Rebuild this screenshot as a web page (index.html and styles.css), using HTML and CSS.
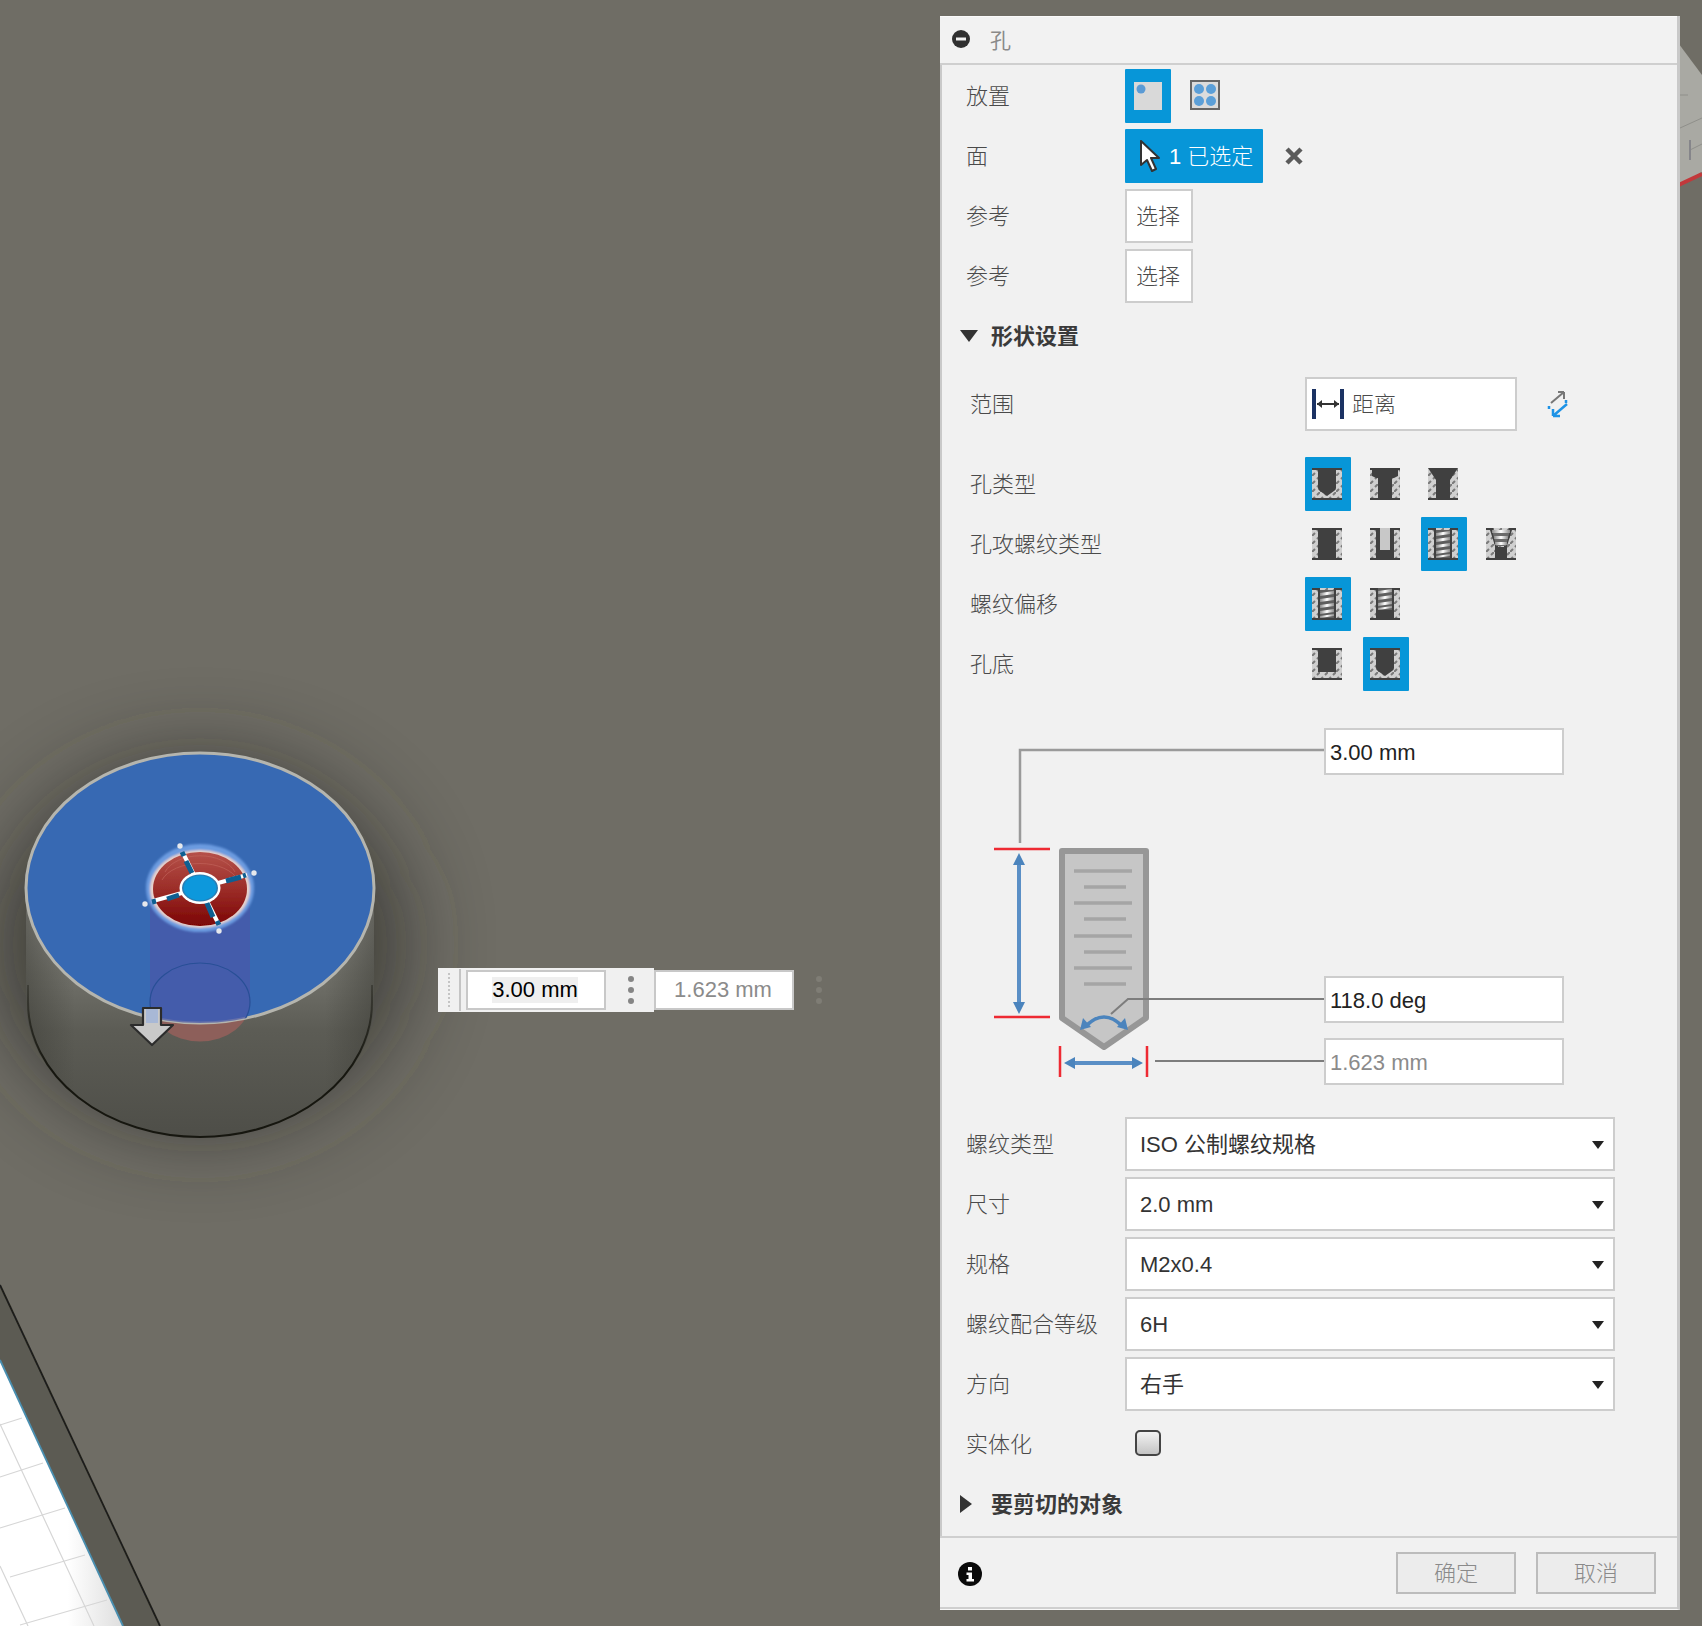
FILE: index.html
```html
<!DOCTYPE html>
<html lang="zh-CN">
<head>
<meta charset="utf-8">
<title>孔</title>
<link rel="stylesheet" href="styles.css">
</head>
<body>
<main class="stage">
  <svg class="scene" viewBox="0 0 1702 1626" width="1702" height="1626" aria-hidden="true">
    <defs>
      <filter id="blur40" x="-60%" y="-60%" width="220%" height="220%"><feGaussianBlur stdDeviation="46"/></filter>
      <filter id="blur1" x="-10%" y="-10%" width="120%" height="120%"><feGaussianBlur stdDeviation="0.7"/></filter>
      <filter id="blur2" x="-20%" y="-20%" width="140%" height="140%"><feGaussianBlur stdDeviation="1.2"/></filter>
      <linearGradient id="side" gradientUnits="userSpaceOnUse" x1="0" y1="900" x2="0" y2="1137">
        <stop offset="0" stop-color="#94948e"/><stop offset=".3" stop-color="#72726b"/><stop offset=".55" stop-color="#5c5c55"/><stop offset="1" stop-color="#4e4e48"/>
      </linearGradient>
      <linearGradient id="sideH" x1="0" y1="0" x2="1" y2="0">
        <stop offset="0" stop-color="#3a3a34" stop-opacity=".5"/><stop offset=".14" stop-color="#3a3a34" stop-opacity="0"/><stop offset=".86" stop-color="#3a3a34" stop-opacity="0"/><stop offset="1" stop-color="#3a3a34" stop-opacity=".5"/>
      </linearGradient>
      <linearGradient id="rimFade" gradientUnits="userSpaceOnUse" x1="0" y1="985" x2="0" y2="1070">
        <stop offset="0" stop-color="#16160f" stop-opacity=".35"/><stop offset="1" stop-color="#16160f"/>
      </linearGradient>
      <linearGradient id="holeRed" x1="0" y1="0" x2="0" y2="1">
        <stop offset="0" stop-color="#b5514a"/><stop offset=".5" stop-color="#9c2d28"/><stop offset="1" stop-color="#7c0505"/>
      </linearGradient>
      <linearGradient id="gridFade" x1="0" y1="0" x2="1" y2="0">
        <stop offset="0" stop-color="#ffffff"/><stop offset=".55" stop-color="#ffffff"/><stop offset="1" stop-color="#dedede"/>
      </linearGradient>
      <clipPath id="aboveFace"><ellipse cx="200" cy="888" rx="174" ry="135"/></clipPath>
    </defs>

    <!-- distant part, top right -->
    <g filter="url(#blur1)">
      <path d="M1670 32 L1702 75 V172 L1670 190Z" fill="#a9a9a3"/>
      <path d="M1680 95h8M1680 128l22-10M1690 150l12-6" stroke="#8f8f8a" stroke-width="1" fill="none"/>
      <path d="M1690 140v20" stroke="#85858a" stroke-width="2" fill="none"/>
      <path d="M1670 189 L1702 174" stroke="#c2393a" stroke-width="4"/>
    </g>

    <!-- plate, bottom left -->
    <path d="M0 1360 L123 1626 H0Z" fill="url(#gridFade)"/>
    <g stroke="#d6d6d6" stroke-width="1.200" fill="none" filter="url(#blur1)">
      <path d="M0 1425 L22 1418M0 1477 L43 1463M0 1528 L65 1508M10 1577 L85 1555M20 1625 L107 1600"/>
      <path d="M0 1424 L94 1626M0 1566 L28 1626"/>
    </g>
    <path d="M0 1285 L160 1626 H123 L0 1360Z" fill="#5c5b53"/>
    <path d="M0 1285 L160 1626" stroke="#1e1e1a" stroke-width="1.800" filter="url(#blur1)"/>
    <path d="M0 1360 L123 1626" stroke="#4a8fb0" stroke-width="1.800" filter="url(#blur1)"/>

    <!-- cylinder -->
    <ellipse cx="200" cy="945" rx="200" ry="180" fill="#2c2c26" opacity=".75" filter="url(#blur40)"/>
    <path d="M26 888 V1002 A174 135 0 0 0 374 1002 V888Z" fill="url(#side)"/>
    <path d="M26 888 V1002 A174 135 0 0 0 374 1002 V888Z" fill="url(#sideH)"/>
    <path d="M28 985 V1002 A172 135 0 0 0 372 1002 V985" fill="none" stroke="url(#rimFade)" stroke-width="2"/>
    <ellipse cx="200" cy="1002" rx="50" ry="39.500" fill="#8d5f5a"/>
    <ellipse cx="200" cy="888" rx="174" ry="135" fill="#3769b3" stroke="#b5b5ae" stroke-width="3"/>
    <g clip-path="url(#aboveFace)">
      <path d="M150 888 V1002 A50 39 0 0 0 250 1002 V888Z" fill="#4a58a8" opacity=".72"/>
      <ellipse cx="200" cy="1002" rx="50" ry="39" fill="none" stroke="#284f96" stroke-width="1.200"/>
    </g>

    <!-- arrow manipulator -->
    <path d="M143 1008 H161 V1025 H173 L152 1045 L131 1025 H143Z" fill="#c9c9c9" stroke="#2c2c2c" stroke-width="2.200" stroke-linejoin="round"/>
    <rect x="146" y="1009" width="12" height="14" fill="#a8b8d6"/>

    <!-- hole -->
    <g filter="url(#blur2)">
      <ellipse cx="200" cy="888" rx="54" ry="44" fill="#6c9be0"/>
      <ellipse cx="200" cy="889" rx="50" ry="39" fill="#e9d2cb"/>
    </g>
    <g filter="url(#blur1)">
      <ellipse cx="200" cy="889" rx="47" ry="37" fill="url(#holeRed)"/>
      <g fill="none" stroke="#c0625a" stroke-width="1" opacity=".7">
        <path d="M165 872 A37 24 0 0 1 235 872M162 880 A40 24 0 0 1 238 880"/>
      </g>
      <path d="M183 853 L219 925" stroke="#ffffff" stroke-width="4"/>
      <path d="M153 901 L247 875" stroke="#ffffff" stroke-width="4"/>
      <path d="M186 861 L192 873M206 901 L213 917M167 899 L179 895M226 881 L241 877M182 852 L184 856M217 921 L219 925M152 902 L156 901M243 876 L246 875" stroke="#0f5f92" stroke-width="5"/>
      <g fill="#e6e8ec">
        <circle cx="180" cy="846" r="2.700"/><circle cx="254" cy="873" r="2.700"/><circle cx="145" cy="904" r="2.700"/><circle cx="219" cy="931" r="2.700"/>
      </g>
      <ellipse cx="200" cy="888" rx="20.500" ry="16" fill="#ffffff"/>
      <ellipse cx="200" cy="888" rx="18" ry="13.500" fill="#2f7cb0"/>
      <ellipse cx="200" cy="888" rx="16.500" ry="12.500" fill="#0798dc"/>
    </g>
  </svg>

  <div class="quick">
    <span class="grip"></span>
    <span class="quick-input"><span class="sel">3.00 mm</span></span>
    <span class="dots"><i></i><i></i><i></i></span>
    <span class="quick-input muted">1.623 mm</span>
    <span class="dots ghost"><i></i><i></i><i></i></span>
  </div>

  <section class="panel">
    <svg class="defs" width="0" height="0" aria-hidden="true">
      <defs>
        <pattern id="hatch" width="8" height="8" patternUnits="userSpaceOnUse">
          <rect width="8" height="8" fill="#d0d0d0"/>
          <path d="M-1 9 L3 5M5 3 L9 -1" stroke="#7a7a7a" stroke-width="2"/>
        </pattern>
        <linearGradient id="thread" x1="0" y1="0" x2="1" y2="0">
          <stop offset="0" stop-color="#8c8c8c"/><stop offset=".5" stop-color="#ffffff"/><stop offset="1" stop-color="#8c8c8c"/>
        </linearGradient>
        <symbol id="base" viewBox="0 0 30 32">
          <rect width="30" height="32" fill="url(#hatch)"/>
          <rect y="30" width="30" height="2" fill="#404040"/>
        </symbol>
        <symbol id="threads" viewBox="0 0 30 32">
          <rect x="8" y="2" width="14" height="28" fill="#5e5e5e"/>
          <path fill="url(#thread)" d="M8 5 L22 3 V6 L8 8ZM8 11 L22 9 V12 L8 14ZM8 17 L22 15 V18 L8 20ZM8 23 L22 21 V24 L8 26ZM8 28 L22 26 V28 L8 30Z"/>
          <path d="M6 0H8V32H6ZM22 0H24V32H22Z" fill="#404040"/>
          <rect width="8" height="2" fill="#404040"/><rect x="22" width="8" height="2" fill="#404040"/>
        </symbol>
      </defs>
    </svg>

    <header class="title">
      <svg class="ico-min" viewBox="0 0 18 18" width="18" height="18"><circle cx="9" cy="9" r="9" fill="#303030"/><rect x="4" y="7.500" width="10" height="3" fill="#f2f2f2"/></svg>
      <span class="title-text">孔</span>
    </header>

    <div class="body">
      <div class="rows top-rows">
        <div class="row">
          <span class="label">放置</span>
          <span class="tool on">
            <svg viewBox="0 0 28 28" width="28" height="28"><rect width="28" height="28" fill="#d9d9d9"/><circle cx="7" cy="7" r="4.500" fill="#5b9bd5"/></svg>
          </span>
          <span class="tool tool-grid">
            <svg viewBox="0 0 30 30" width="30" height="30"><rect x="1" y="1" width="28" height="28" fill="#dcdcdc" stroke="#666" stroke-width="2"/><g fill="#5b9fd8"><circle cx="9" cy="9" r="5"/><circle cx="21" cy="9" r="5"/><circle cx="9" cy="21" r="5"/><circle cx="21" cy="21" r="5"/></g></svg>
          </span>
        </div>
        <div class="row">
          <span class="label">面</span>
          <span class="picked">
            <svg viewBox="0 0 20 32" width="20" height="32"><path d="M1 1 L1 25 L7 20 L12 31 L16 29 L11 18 L19 18Z" fill="#fff" stroke="#333" stroke-width="2" stroke-linejoin="round"/></svg>
            <span class="zh">1 已选定</span>
          </span>
          <svg class="clear" viewBox="0 0 18 18" width="18" height="18"><path d="M2 2 L16 16M16 2 L2 16" stroke="#5a5a5a" stroke-width="4.500"/></svg>
        </div>
        <div class="row"><span class="label">参考</span><span class="pick">选择</span></div>
        <div class="row"><span class="label">参考</span><span class="pick">选择</span></div>
        <div class="row section">
          <span class="tri-down"></span><span class="section-text">形状设置</span>
        </div>
      </div>

      <div class="row sub range-row">
        <span class="label">范围</span>
        <span class="range-box">
          <svg viewBox="0 0 32 30" width="32" height="30"><path d="M2 0V30M30 0V30" stroke="#1b3263" stroke-width="4"/><path d="M5 15H27" stroke="#333" stroke-width="2"/><path d="M5 15l5-4v8zM27 15l-5-4v8z" fill="#333"/></svg>
          <span class="zh">距离</span>
        </span>
        <svg class="swap" viewBox="0 0 22 28" width="22" height="28"><path d="M4 13 L17 2M17 2h-6M17 2v7" fill="none" stroke="#777" stroke-width="2"/><path d="M20 14 L6 26M6 26h7M6 26v-7M2 19v-3M19 10v3" fill="none" stroke="#1e93e6" stroke-width="2.500"/></svg>
      </div>

      <div class="rows icon-rows">
        <div class="row sub">
          <span class="label">孔类型</span>
          <span class="tool on"><svg class="hole" viewBox="0 0 30 32" width="30" height="32"><use href="#base"/><path d="M0 0H30V2H24V20Q24 22 22 23L15 28L8 23Q6 22 6 20V2H0Z" fill="#404040"/></svg></span>
          <span class="tool"><svg class="hole" viewBox="0 0 30 32" width="30" height="32"><use href="#base"/><path d="M0 0H30V2H28V8L24 10H22V32H8V10H6L2 8V2H0Z" fill="#404040"/></svg></span>
          <span class="tool"><svg class="hole" viewBox="0 0 30 32" width="30" height="32"><use href="#base"/><path d="M0 0H30L22 12V32H8V12Z" fill="#404040"/></svg></span>
        </div>
        <div class="row sub">
          <span class="label">孔攻螺纹类型</span>
          <span class="tool"><svg class="hole" viewBox="0 0 30 32" width="30" height="32"><use href="#base"/><path d="M0 0H30V2H24V32H6V2H0Z" fill="#404040"/></svg></span>
          <span class="tool"><svg class="hole" viewBox="0 0 30 32" width="30" height="32"><use href="#base"/><path d="M0 0H30V2H24V32H6V2H0Z" fill="#404040"/><rect x="10" width="10" height="22" fill="#c8c8c8"/></svg></span>
          <span class="tool on"><svg class="hole" viewBox="0 0 30 32" width="30" height="32"><use href="#base"/><use href="#threads"/></svg></span>
          <span class="tool"><svg class="hole" viewBox="0 0 30 32" width="30" height="32"><use href="#base"/><path d="M0 0H7L12 18V32H18V18L23 0H30V2H26L21 18V32H9V18L4 2H0Z" fill="#404040"/><rect x="11" y="19" width="8" height="12" fill="#404040"/><path d="M6 2H24L20 18H10Z" fill="#6a6a6a"/><g fill="url(#thread)"><rect x="6" y="2" width="18" height="3"/><rect x="8" y="8" width="14" height="3"/><rect x="9" y="14" width="12" height="3"/></g></svg></span>
        </div>
        <div class="row sub">
          <span class="label">螺纹偏移</span>
          <span class="tool on"><svg class="hole" viewBox="0 0 30 32" width="30" height="32"><use href="#base"/><use href="#threads"/></svg></span>
          <span class="tool"><svg class="hole" viewBox="0 0 30 32" width="30" height="32"><use href="#base"/><path d="M0 0H30V2H24V32H6V2H0Z" fill="#404040"/><rect x="8" width="14" height="22" fill="#5e5e5e"/><path fill="url(#thread)" d="M8 3 L22 1 V4 L8 6ZM8 9 L22 7 V10 L8 12ZM8 15 L22 13 V16 L8 18ZM8 20 L22 18 V20 L8 22Z"/></svg></span>
        </div>
        <div class="row sub">
          <span class="label">孔底</span>
          <span class="tool"><svg class="hole" viewBox="0 0 30 32" width="30" height="32"><use href="#base"/><path d="M0 0H30V2H24V24H6V2H0Z" fill="#404040"/></svg></span>
          <span class="tool on"><svg class="hole" viewBox="0 0 30 32" width="30" height="32"><use href="#base"/><path d="M0 0H30V2H24V20Q24 22 22 23L15 28L8 23Q6 22 6 20V2H0Z" fill="#404040"/></svg></span>
        </div>
      </div>

      <div class="diagram">
        <svg class="dia-art" viewBox="0 0 740 426" width="740" height="426" aria-hidden="true">
          <g transform="translate(-940 -691)">
            <path d="M1020 843 V750 H1326" fill="none" stroke="#9a9a9a" stroke-width="2.500"/>
            <path d="M994 849 H1050M994 1017 H1050" stroke="#ee2a33" stroke-width="2.500"/>
            <path d="M1019 860 V1007" stroke="#5a8fc6" stroke-width="4"/>
            <path d="M1019 853 L1025 865 H1013ZM1019 1014 L1025 1002 H1013Z" fill="#4b84bd"/>
            <path d="M1062 851 H1146 V1018 L1104 1047 L1062 1018Z" fill="#c6c6c6" stroke="#979797" stroke-width="6" stroke-linejoin="round"/>
            <g stroke="#a5a5a5" stroke-width="3.500">
              <path d="M1074 871H1132M1084 887H1126M1074 903H1132M1084 919H1126M1074 936H1132M1084 952H1126M1074 968H1132M1084 984H1126"/>
            </g>
            <path d="M1111 1014 L1128 999 H1326" fill="none" stroke="#7d7d7d" stroke-width="2"/>
            <path d="M1086 1026 Q1104 1008 1122 1026" fill="none" stroke="#4b84bd" stroke-width="3.500"/>
            <path d="M1080 1030 L1083 1018 L1091 1027ZM1128 1030 L1125 1018 L1117 1027Z" fill="#4b84bd"/>
            <path d="M1060 1046 V1077M1147 1046 V1077" stroke="#ee2a33" stroke-width="2.500"/>
            <path d="M1070 1063 H1137" stroke="#5a8fc6" stroke-width="4"/>
            <path d="M1064 1063 L1075 1057 V1069ZM1143 1063 L1132 1057 V1069Z" fill="#4b84bd"/>
            <path d="M1155 1061 H1326" stroke="#7d7d7d" stroke-width="2"/>
          </g>
        </svg>
        <span class="dim">3.00 mm</span>
        <span class="dim dim-angle">118.0 deg</span>
        <span class="dim dim-width muted">1.623 mm</span>
      </div>

      <div class="rows">
        <div class="row"><span class="label">螺纹类型</span><span class="select zh-select">ISO 公制螺纹规格</span></div>
        <div class="row"><span class="label">尺寸</span><span class="select">2.0 mm</span></div>
        <div class="row"><span class="label">规格</span><span class="select">M2x0.4</span></div>
        <div class="row"><span class="label">螺纹配合等级</span><span class="select">6H</span></div>
        <div class="row"><span class="label">方向</span><span class="select zh-select">右手</span></div>
        <div class="row"><span class="label">实体化</span><span class="check"></span></div>
        <div class="row section"><span class="tri-right"></span><span class="section-text">要剪切的对象</span></div>
      </div>
    </div>

    <footer class="foot">
      <svg class="info" viewBox="0 0 24 24" width="24" height="24"><circle cx="12" cy="12" r="12" fill="#0a0a0a"/><rect x="10" y="5" width="4" height="3.500" fill="#fff"/><path d="M8.500 10.500H14V17H16V19.500H8.500V17H10.500V13H8.500Z" fill="#fff"/></svg>
      <span class="btn">确定</span>
      <span class="btn">取消</span>
    </footer>
  </section>
</main>
</body>
</html>
```

FILE: styles.css
```css
* { box-sizing: border-box; }
html, body { margin: 0; padding: 0; }
body {
  width: 1702px;
  height: 1626px;
  overflow: hidden;
  background: #6f6d65;
  font-family: "Liberation Sans", "Noto Sans CJK SC", sans-serif;
  font-size: 22px;
  color: #4a4a4a;
}
.stage { position: relative; width: 1702px; height: 1626px; }
.scene { position: absolute; inset: 0; display: block; }
.defs { position: absolute; }

/* Quick dimension strip floating in the viewport */
.quick {
  position: absolute;
  left: 438px;
  top: 968px;
  height: 44px;
  display: flex;
  align-items: center;
}
.quick::before {
  content: "";
  position: absolute;
  left: 0;
  top: 0;
  width: 216px;
  height: 44px;
  background: #f0f0f0;
}
.grip {
  position: relative;
  width: 28px;
  height: 44px;
  flex: none;
}
.grip::before {
  content: "";
  position: absolute;
  left: 9px;
  top: 4px;
  width: 5px;
  height: 36px;
  background-image: radial-gradient(circle, #c4c4c4 1px, transparent 1.2px);
  background-size: 4px 4px;
}
.grip::after {
  content: "";
  position: absolute;
  left: 21px;
  top: 1px;
  width: 2px;
  height: 42px;
  background: #c4c4c4;
}
.quick-input {
  position: relative;
  width: 140px;
  height: 40px;
  flex: none;
  display: flex;
  align-items: center;
  justify-content: center;
  padding-right: 2px;
  background: #fff;
  border: 2px solid #c8c8c8;
  color: #000;
}
.quick-input .sel { background: #efefef; line-height: 26px; }
.quick-input.muted { color: #8b8b8b; margin-left: -2px; }
.dots {
  position: relative;
  width: 50px;
  flex: none;
  display: flex;
  flex-direction: column;
  align-items: center;
  gap: 5px;
}
.dots i { width: 6px; height: 6px; border-radius: 50%; background: #858585; }
.dots.ghost i { background: #7f7d75; }

/* Dialog */
.panel {
  position: absolute;
  left: 940px;
  top: 16px;
  width: 740px;
  height: 1594px;
  display: flex;
  flex-direction: column;
  background: #f1f1f1;
  border-right: 3px solid #c9c9c9;
  border-bottom: 1px solid #f7f7f7;
}
.title {
  height: 49px;
  flex: none;
  display: flex;
  align-items: center;
  gap: 20px;
  padding: 0 0 2px 12px;
  background: #f2f2f2;
  border-bottom: 2px solid #cfcfcf;
  border-top: 1px solid #fafafa;
}
.title-text { color: #8a8a8a; font-size: 21px; }
.ico-min { display: block; }

.body {
  flex: 1;
  padding-top: 4px;
  border-left: 2px solid #c9c9c9;
  display: flex;
  flex-direction: column;
}
.rows { display: flex; flex-direction: column; gap: 6px; }

.row {
  display: flex;
  align-items: center;
  height: 54px;
  padding-left: 24px;
}
.label { width: 159px; flex: none; padding-bottom: 4px; font-weight: 300; }
.zh { padding-bottom: 4px; font-weight: 300; }

/* sub rows of the shape section */
.row.sub { padding-left: 28px; }
.row.sub .label { width: 335px; flex: none; }
.range-row { margin-top: 14px; }
.icon-rows { margin-top: 26px; }

.tool {
  width: 46px;
  height: 54px;
  flex: none;
  margin-right: 12px;
  display: flex;
  align-items: center;
  justify-content: center;
  border-radius: 1px;
}
.tool svg { display: block; }
.tool-grid { padding: 0 2px 2px 0; }
.hole { transform: translateX(-1px); }
.tool.on { background: #0796d8; }

.picked {
  width: 138px;
  height: 54px;
  flex: none;
  display: flex;
  align-items: center;
  gap: 9px;
  padding-left: 15px;
  background: #0796d8;
  color: #fff;
  border-radius: 1px;
}
.clear { margin-left: 22px; }
.pick {
  width: 68px;
  height: 54px;
  flex: none;
  display: flex;
  align-items: center;
  justify-content: center;
  padding: 0 2px 4px 0;
  background: #fff;
  border: 2px solid #cdcdcd;
  font-weight: 300;
}

.section { gap: 13px; padding-left: 18px; }
.section-text { font-weight: 700; color: #3a3a3a; padding-bottom: 4px; }
.tri-down {
  width: 0;
  height: 0;
  border-left: 9px solid transparent;
  border-right: 9px solid transparent;
  border-top: 12px solid #333;
}
.tri-right {
  width: 0;
  height: 0;
  margin-right: 6px;
  border-top: 9px solid transparent;
  border-bottom: 9px solid transparent;
  border-left: 12px solid #333;
}

.range-box {
  width: 212px;
  height: 54px;
  flex: none;
  display: flex;
  align-items: center;
  gap: 8px;
  padding-left: 5px;
  background: #fff;
  border: 2px solid #cdcdcd;
}
.swap { margin-left: 30px; }

.diagram {
  position: relative;
  height: 426px;
  flex: none;
  display: flex;
  flex-direction: column;
  padding: 37px 0 0 382px;
}
.dia-art { position: absolute; left: -2px; top: 0; display: block; }
.dim {
  position: relative;
  width: 240px;
  height: 47px;
  flex: none;
  display: flex;
  align-items: center;
  padding: 2px 0 0 4px;
  background: #fff;
  border: 2px solid #cdcdcd;
  color: #222;
}
.dim-angle { margin-top: 201px; }
.dim-width { margin-top: 15px; }
.dim.muted { color: #8b8b8b; }

.select {
  position: relative;
  width: 490px;
  height: 54px;
  flex: none;
  display: flex;
  align-items: center;
  padding: 2px 0 0 13px;
  background: #fff;
  border: 2px solid #cdcdcd;
  color: #333;
}
.select.zh-select { padding: 0 0 4px 13px; }
.select::after {
  content: "";
  position: absolute;
  right: 9px;
  top: 22px;
  border-left: 6px solid transparent;
  border-right: 6px solid transparent;
  border-top: 8px solid #222;
}
.check {
  width: 26px;
  height: 26px;
  flex: none;
  margin: 0 0 2px 10px;
  border: 2px solid #444;
  border-radius: 5px;
  background: linear-gradient(#f2f2f2, #c4c4c4);
}

.foot {
  height: 73px;
  flex: none;
  display: flex;
  align-items: center;
  gap: 20px;
  padding: 0 21px 0 18px;
  background: #f1f1f1;
  border-top: 2px solid #cfcfcf;
  border-bottom: 2px solid #cfcfcf;
}
.info { display: block; margin: 2px auto 0 0; }
.btn {
  width: 120px;
  height: 42px;
  flex: none;
  display: flex;
  align-items: center;
  justify-content: center;
  padding-bottom: 4px;
  background: #ececec;
  border: 2px solid #bcbcbc;
  color: #8a8a8a;
  font-weight: 300;
}
```
